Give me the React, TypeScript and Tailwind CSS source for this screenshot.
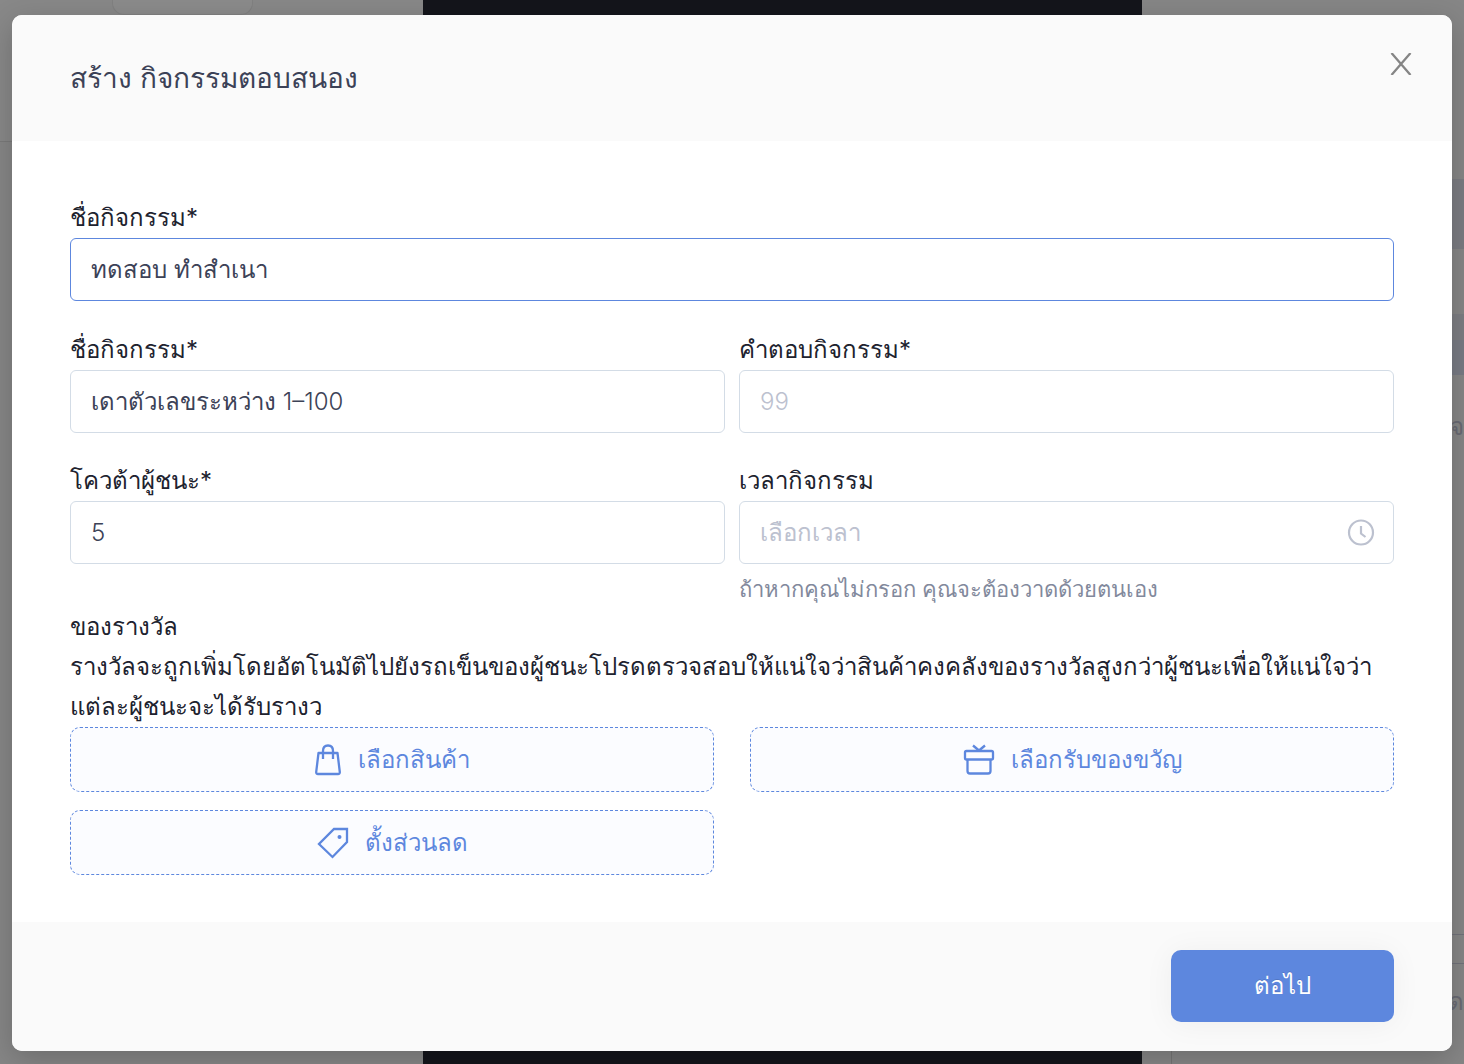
import { useState } from "react";
import type { ReactNode } from "react";

type FieldProps = {
  id: string;
  label: string;
  value: string;
  onChange: (value: string) => void;
  placeholder?: string;
  active?: boolean;
  icon?: ReactNode;
  hint?: string;
};

const Field = ({
  id,
  label,
  value,
  onChange,
  placeholder,
  active,
  icon,
  hint,
}: FieldProps) => (
  <div>
    <label htmlFor={id} className="block h-10 text-2xl leading-10 text-[#20222e]">
      {label}
    </label>
    <div
      className={`flex h-[63px] items-center rounded-md border bg-white pr-[18px] pl-5 ${
        active ? "border-[#5d87de]" : "border-[#d3dce6]"
      }`}
    >
      <input
        id={id}
        type="text"
        value={value}
        placeholder={placeholder}
        onChange={(e) => onChange(e.target.value)}
        className="h-full min-w-0 flex-1 bg-transparent text-2xl font-light text-[#3c4257] outline-none placeholder:text-[#bcc1cf]"
      />
      {icon}
    </div>
    {hint && <p className="pt-[7px] text-[22px] leading-9 text-[#82899c]">{hint}</p>}
  </div>
);

const ClockIcon = () => (
  <svg width="28" height="28" viewBox="0 0 28 28" fill="none" stroke="#bcc1cf" strokeWidth="2.2">
    <circle cx="14" cy="13.5" r="12" />
    <path d="M14 7v7.5l4.5 3.5" />
  </svg>
);

const BagIcon = () => (
  <svg width="28" height="32" viewBox="0 0 28 32" fill="none" stroke="currentColor" strokeWidth="2.3" strokeLinejoin="round">
    <path d="M4.5 9h19l2.3 19q.2 2-1.8 2H4q-2 0-1.800-2z" />
    <path d="M9 15V7q0-5.500 5-5.500t5 5.500v8" />
  </svg>
);

const GiftIcon = () => (
  <svg width="32" height="32" viewBox="0 0 32 32" fill="none" stroke="currentColor" strokeWidth="2.3" strokeLinejoin="round">
    <rect x="2" y="7" width="28" height="8.5" rx="1.5" />
    <path d="M4.5 15.500V27q0 2.500 2.500 2.500h18q2.500 0 2.500-2.500V15.500M10 1.500l6 5 6-5" />
  </svg>
);

const TagIcon = () => (
  <svg width="32" height="32" viewBox="0 0 32 32" fill="none" stroke="currentColor" strokeWidth="2.3">
    <path d="M17 2h13v13L15.500 30 2 17z" />
    <circle cx="22.5" cy="10" r="2" fill="currentColor" stroke="none" />
  </svg>
);

const PrizeButton = ({ icon, children }: { icon: ReactNode; children: ReactNode }) => (
  <button
    type="button"
    className="flex h-[65px] items-center justify-center gap-4 rounded-[10px] border border-dashed border-[#5d87de] bg-[#fbfcff] text-2xl text-[#5d87de]"
  >
    {icon}
    {children}
  </button>
);

const App = () => {
  const [name, setName] = useState("ทดสอบ ทำสำเนา");
  const [question, setQuestion] = useState("เดาตัวเลขระหว่าง 1–100");
  const [answer, setAnswer] = useState("");
  const [quota, setQuota] = useState("5");
  const [time, setTime] = useState("");

  return (
    <div className="relative min-h-screen overflow-hidden bg-[#868686] px-3 pt-[15px] pb-[13px] font-[Inter,sans-serif]">
      {/* Page behind the dialog */}
      <div className="absolute inset-0 grid grid-cols-[423fr_719fr_322fr]" aria-hidden="true">
        <div>
          <div className="h-[142px] border-b border-[#7a7a7a] bg-[#888888]">
            <div className="ml-28 h-[15px] w-[141px] rounded-b-xl border border-t-0 border-[#818181] bg-[#8b8b8b]" />
          </div>
        </div>
        <div className="bg-[#14151b]" />
        <div className="flex flex-col items-end bg-[#868686] pl-[29px] text-2xl text-[#696a73]">
          <div className="mt-[179px] h-[70px] w-3 bg-[#7b7c82]" />
          <div className="mt-[65px] h-[26px] w-3 bg-[#7d7e83]" />
          <div className="h-[35px] w-3 bg-[#787b84]" />
          <p className="mt-[34px] leading-9">าจ</p>
          <div className="mt-auto h-[30px] w-full border-y border-[#71727a]" />
          <div className="flex h-[100px] w-full justify-end border-l border-[#757575] pt-5">
            <p className="leading-9">ด</p>
          </div>
        </div>
      </div>

      <form
        role="dialog"
        aria-labelledby="dialog-title"
        onSubmit={(e) => e.preventDefault()}
        className="relative overflow-hidden rounded-[10px] bg-white shadow-[0_8px_30px_rgba(0,0,0,0.2)]"
      >
        {/* Header */}
        <header className="flex h-[126px] items-center justify-between bg-[#fafafa] pr-10 pl-[58px]">
          <h1 id="dialog-title" className="text-[28px] text-[#3c4257]">
            สร้าง กิจกรรมตอบสนอง
          </h1>
          <button type="button" aria-label="Close" className="mb-7 text-[#858585]">
            <svg width="22" height="22" viewBox="0 0 22 22" fill="none" stroke="currentColor" strokeWidth="2.3">
              <path d="M1.5 0l19 22M20.5 0l-19 22" />
            </svg>
          </button>
        </header>

        {/* Fields */}
        <div className="px-[58px] pt-[57px] pb-[47px]">
          <Field id="name" label="ชื่อกิจกรรม*" value={name} onChange={setName} active />
          <div className="mt-[29px] grid grid-cols-2 gap-x-3.5 gap-y-7">
            <Field id="question" label="ชื่อกิจกรรม*" value={question} onChange={setQuestion} />
            <Field id="answer" label="คำตอบกิจกรรม*" value={answer} onChange={setAnswer} placeholder="99" />
            <Field id="quota" label="โควต้าผู้ชนะ*" value={quota} onChange={setQuota} />
            <Field
              id="time"
              label="เวลากิจกรรม"
              value={time}
              onChange={setTime}
              placeholder="เลือกเวลา"
              icon={<ClockIcon />}
              hint="ถ้าหากคุณไม่กรอก คุณจะต้องวาดด้วยตนเอง"
            />
          </div>

          {/* Prizes */}
          <h2 className="text-2xl leading-10 text-[#20222e]">ของรางวัล</h2>
          <p className="text-2xl leading-10 text-[#20222e]">
            รางวัลจะถูกเพิ่มโดยอัตโนมัติไปยังรถเข็นของผู้ชนะโปรดตรวจสอบให้แน่ใจว่าสินค้าคงคลังของรางวัลสูงกว่าผู้ชนะเพื่อให้แน่ใจว่าแต่ละผู้ชนะจะได้รับรางว
          </p>
          <div className="grid grid-cols-2 gap-x-9 gap-y-[18px]">
            <PrizeButton icon={<BagIcon />}>เลือกสินค้า</PrizeButton>
            <PrizeButton icon={<GiftIcon />}>เลือกรับของขวัญ</PrizeButton>
            <PrizeButton icon={<TagIcon />}>ตั้งส่วนลด</PrizeButton>
          </div>
        </div>

        {/* Footer */}
        <footer className="flex justify-end bg-[#fafafa] px-[58px] pt-7 pb-[29px]">
          <button
            type="submit"
            className="h-[72px] w-[223px] rounded-[10px] bg-[#5d87de] text-2xl font-medium text-white shadow-[0_2px_30px_rgba(0,0,0,0.05)] text-shadow-[0_-1px_0_rgba(0,0,0,0.12)]"
          >
            ต่อไป
          </button>
        </footer>
      </form>
    </div>
  );
};

export default App;
